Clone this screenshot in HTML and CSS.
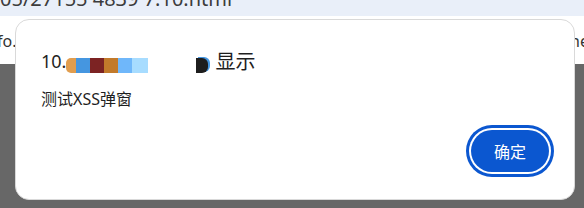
FILE: index.html
```html
<!DOCTYPE html>
<html lang="zh-CN">
<head>
  <meta charset="UTF-8">
  <meta name="viewport" content="width=device-width, initial-scale=1.0">
  <title>alert</title>
  <link rel="stylesheet" href="styles.css">
</head>
<body>
  <div class="urlbar">
    <span class="url">05/27155 4839 7.10.html</span>
  </div>
  <div class="page">
    <div class="page-line">
      <span class="left-text">fo.</span>
      <span class="right-text">ne</span>
    </div>
  </div>
  <div class="shade"></div>

  <div class="dialog">
    <div class="origin">
      <span class="num">10.</span>
      <span class="mosaic">
        <i class="m1"></i><i class="m2"></i><i class="m3"></i><i class="m4"></i><i class="m5"></i><i class="m6"></i>
      </span>
      <span class="blot"></span>
      <span class="says">显示</span>
    </div>
    <p class="message">测试XSS弹窗</p>
    <div class="actions">
      <button class="btn-ok">确定</button>
    </div>
  </div>
</body>
</html>
```

FILE: styles.css
```css
body {
  margin: 0;
  width: 584px;
  height: 208px;
  overflow: hidden;
  position: relative;
  background: #ffffff;
  font-family: "Noto Sans", "Noto Sans CJK SC", sans-serif;
}

.urlbar {
  height: 16px;
  background: #e9eff9;
  overflow: hidden;
}

.url {
  display: block;
  margin-top: -13px;
  font-size: 20px;
  line-height: 24px;
  color: #3c3c3c;
}

.page {
  height: 48px;
}

.page-line {
  display: flex;
  justify-content: space-between;
  padding-top: 14px;
  font-size: 16px;
  line-height: 22px;
  color: #333;
}

.left-text {
  margin-left: -3px;
}

.right-text {
  margin-right: -5px;
}

.shade {
  height: 144px;
  background: #676767;
}

.dialog {
  position: absolute;
  left: 15px;
  top: 19px;
  width: 558px;
  height: 179px;
  background: #ffffff;
  border: 1px solid #d9d9d9;
  border-radius: 14px;
}

.origin {
  display: flex;
  align-items: center;
  margin: 30px 0 0 25px;
  height: 22px;
}

.num {
  font-size: 18px;
  color: #1f1f1f;
  line-height: 22px;
}

.mosaic {
  display: flex;
  margin-top: 8px;
  height: 15px;
}

.mosaic i {
  display: block;
  width: 14px;
  height: 15px;
}

.m1 { background: #e19d4e; border-radius: 5px 0 0 5px; width: 10px !important; }
.m2 { background: #4596e0; }
.m3 { background: #7c2323; }
.m4 { background: #c27a2b; }
.m5 { background: #6fb7fa; }
.m6 { background: #a7dcff; width: 16px !important; }

.blot {
  display: block;
  width: 12px;
  height: 15px;
  margin: 8px 0 0 48px;
  background: #1d1d1d;
  border-radius: 0 6px 6px 0;
  box-shadow: 2px -1px 0 #4596e0;
}

.says {
  margin-left: 7px;
  font-size: 20px;
  color: #1f1f1f;
  line-height: 22px;
  font-family: "Noto Sans CJK SC", sans-serif;
}

.message {
  margin: 17px 0 0 25px;
  font-size: 16px;
  line-height: 20px;
  color: #1f1f1f;
  font-family: "Noto Sans", "Noto Sans CJK SC", sans-serif;
}

.actions {
  display: flex;
  justify-content: flex-end;
  margin: 21px 25px 0 0;
}

.btn-ok {
  width: 78px;
  height: 42px;
  border: none;
  border-radius: 21px;
  background: #0b57d0;
  color: #ffffff;
  font-size: 16px;
  font-family: "Noto Sans CJK SC", sans-serif;
  box-shadow: 0 0 0 2px #ffffff, 0 0 0 5px #0b57d0;
  cursor: pointer;
}
```
